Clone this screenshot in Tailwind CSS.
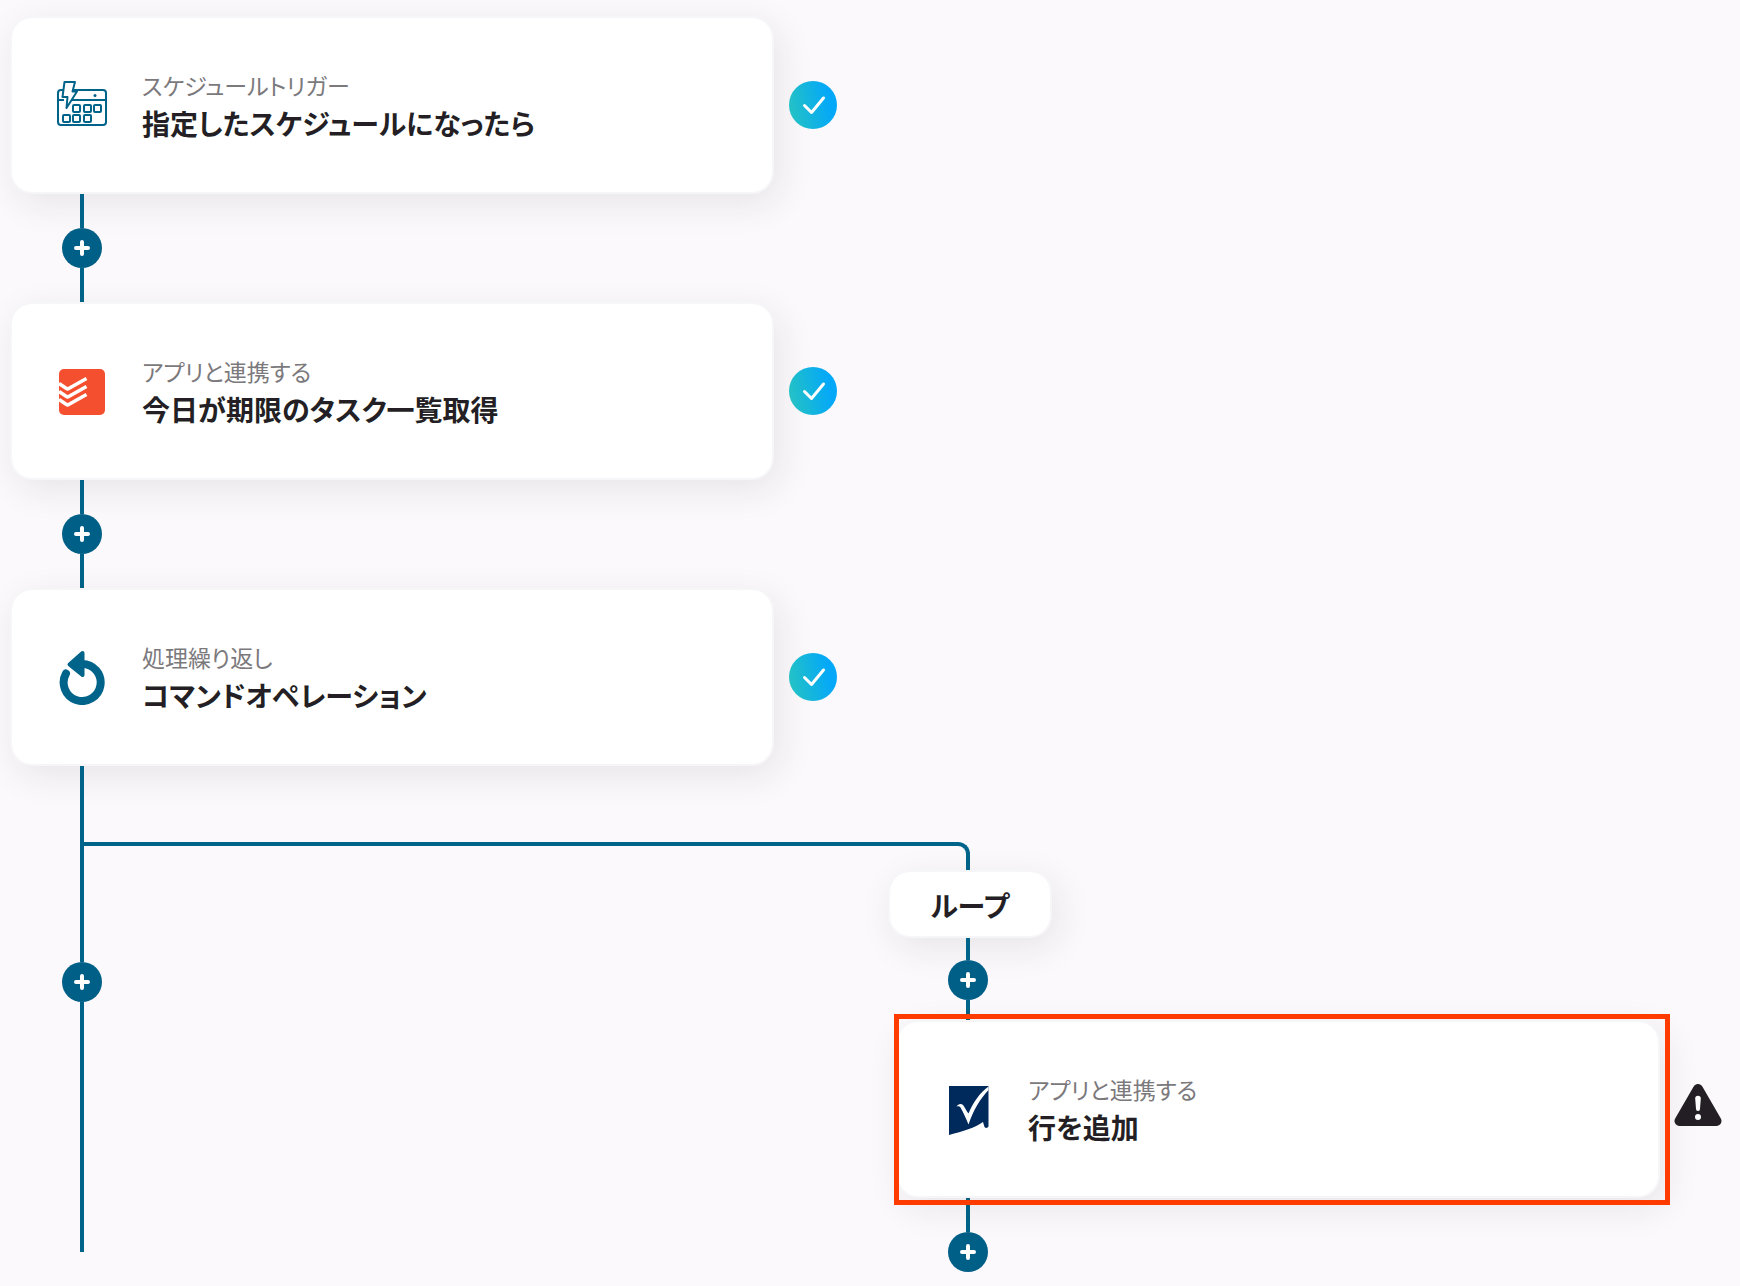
<!DOCTYPE html>
<html lang="ja">
<head>
  <meta charset="UTF-8" />
  <meta name="viewport" content="width=device-width, initial-scale=1.0"/>
  <title>フローボット</title>
  <script src="https://cdn.jsdelivr.net/npm/@tailwindcss/browser@4"></script>
</head>
<body class="bg-[#fbf9fc] min-h-screen text-[#231f24] font-['Noto_Sans_CJK_JP',sans-serif] [font-feature-settings:'palt']">

  <!-- Shared icons -->
  <svg class="absolute w-0 h-0" aria-hidden="true">
    <defs>
      <linearGradient id="done" x1="0" y1="0.6" x2="1" y2="0.4">
        <stop offset="0" stop-color="#24c2c4"/>
        <stop offset="0.85" stop-color="#04a8f8"/>
      </linearGradient>
    </defs>
    <symbol id="plus" viewBox="0 0 16 16">
      <path d="M8 2v12M2 8h12" fill="none" stroke="#fff" stroke-width="4" stroke-linecap="round"/>
    </symbol>
    <symbol id="check" viewBox="0 0 48 48">
      <circle cx="24" cy="24" r="24" fill="url(#done)"/>
      <path d="M15.500 24.500l7 7L34.500 17" fill="none" stroke="#fff" stroke-width="3" stroke-linecap="round" stroke-linejoin="round"/>
    </symbol>
  </svg>

  <main class="pt-4 pl-[10px]">

    <!-- Step 1: schedule trigger -->
    <div class="flex items-center gap-[15px]">
      <section class="w-[764px] h-[178px] flex items-center gap-[34px] pl-11 bg-white border-2 border-[#f6f5f7] bg-clip-padding rounded-[22px] shadow-[6px_10px_36px_rgba(35,31,36,0.09)]">
        <svg class="w-[52px] h-[52px] shrink-0" viewBox="0 1 52 52" fill="none" stroke="#00648a" stroke-width="2" stroke-linejoin="round">
          <path d="M16.500 12H47a3 3 0 0 1 3 3v29a3 3 0 0 1-3 3H5a3 3 0 0 1-3-3V15a3 3 0 0 1 3-3h2M2 22h6M15 22h35"/>
          <path d="M8.500 4H19l-2.500 9.500H21L10.500 30l1-11H6.500z"/>
          <rect x="17" y="27" width="7" height="7" rx="1"/>
          <rect x="28" y="27" width="7" height="7" rx="1"/>
          <rect x="38" y="27" width="7" height="7" rx="1"/>
          <rect x="7" y="37" width="7" height="7" rx="1"/>
          <rect x="17" y="37" width="7" height="7" rx="1"/>
          <rect x="28" y="37" width="7" height="7" rx="1"/>
          <circle cx="39" cy="17.500" r="1.500" fill="#00648a" stroke="none"/>
        </svg>
        <div class="pt-1">
          <p class="text-[23px] leading-8 text-[#7b797c]">スケジュールトリガー</p>
          <h2 class="text-[28px] leading-[44px] font-bold">指定したスケジュールになったら</h2>
        </div>
      </section>
      <svg class="w-12 h-12 shrink-0" role="img" aria-label="設定済み"><use href="#check"/></svg>
    </div>

    <!-- Connector -->
    <div class="ml-[52px] w-10 h-[108px] flex flex-col items-center">
      <span class="w-1 flex-1 bg-[#00648a]"></span>
      <button type="button" aria-label="追加" class="w-10 h-10 rounded-full bg-[#005f86] flex items-center justify-center hover:bg-[#004f70]"><svg class="w-4 h-4"><use href="#plus"/></svg></button>
      <span class="w-1 flex-1 bg-[#00648a]"></span>
    </div>

    <!-- Step 2: Todoist -->
    <div class="flex items-center gap-[15px]">
      <section class="w-[764px] h-[178px] flex items-center gap-[34px] pl-11 bg-white border-2 border-[#f6f5f7] bg-clip-padding rounded-[22px] shadow-[6px_10px_36px_rgba(35,31,36,0.09)]">
        <svg class="w-[52px] h-[52px] shrink-0" viewBox="0 0 52 52">
          <rect x="3" y="4" width="46" height="46" rx="5" fill="#f4502f"/>
          <path d="M3 18.500l7.500 5a2 2 0 0 0 2.200 0L30.500 13.500M3 26.500l7.500 5a2 2 0 0 0 2.200 0L30.500 21.500M3 34.500l7.500 5a2 2 0 0 0 2.200 0L30.500 29.500" fill="none" stroke="#fff" stroke-width="3.500" stroke-linejoin="round"/>
        </svg>
        <div class="pt-1">
          <p class="text-[23px] leading-8 text-[#7b797c]">アプリと連携する</p>
          <h2 class="text-[28px] leading-[44px] font-bold">今日が期限のタスク一覧取得</h2>
        </div>
      </section>
      <svg class="w-12 h-12 shrink-0" role="img" aria-label="設定済み"><use href="#check"/></svg>
    </div>

    <!-- Connector -->
    <div class="ml-[52px] w-10 h-[108px] flex flex-col items-center">
      <span class="w-1 flex-1 bg-[#00648a]"></span>
      <button type="button" aria-label="追加" class="w-10 h-10 rounded-full bg-[#005f86] flex items-center justify-center hover:bg-[#004f70]"><svg class="w-4 h-4"><use href="#plus"/></svg></button>
      <span class="w-1 flex-1 bg-[#00648a]"></span>
    </div>

    <!-- Step 3: loop -->
    <div class="flex items-center gap-[15px]">
      <section class="w-[764px] h-[178px] flex items-center gap-[34px] pl-11 bg-white border-2 border-[#f6f5f7] bg-clip-padding rounded-[22px] shadow-[6px_10px_36px_rgba(35,31,36,0.09)]">
        <svg class="w-[52px] h-[56px] shrink-0" viewBox="0 0 52 56" fill="none">
          <path d="M10 24.500A18.500 18.500 0 1 0 26 15" stroke="#00648a" stroke-width="8" stroke-linecap="round"/>
          <path d="M26.500 4L13.500 15.500L26.500 26z" fill="#00648a" stroke="#00648a" stroke-width="4" stroke-linejoin="round"/>
        </svg>
        <div class="pt-1">
          <p class="text-[23px] leading-8 text-[#7b797c]">処理繰り返し</p>
          <h2 class="text-[28px] leading-[44px] font-bold">コマンドオペレーション</h2>
        </div>
      </section>
      <svg class="w-12 h-12 shrink-0" role="img" aria-label="設定済み"><use href="#check"/></svg>
    </div>

    <!-- Fork -->
    <div class="flex items-start">

      <!-- Trunk -->
      <div class="ml-[52px] w-10 shrink-0 flex flex-col items-center">
        <span class="w-1 h-[196px] bg-[#00648a]"></span>
        <button type="button" aria-label="追加" class="w-10 h-10 rounded-full bg-[#005f86] flex items-center justify-center hover:bg-[#004f70]"><svg class="w-4 h-4"><use href="#plus"/></svg></button>
        <span class="w-1 h-[250px] bg-[#00648a]"></span>
      </div>

      <!-- Loop branch -->
      <div class="-ml-[18px] mt-[76px]">
        <div class="w-[886px] h-7 border-t-4 border-r-4 border-[#00648a] rounded-tr-[12px]"></div>

        <div class="ml-[812px]">
          <div class="-ml-2 w-[164px] h-[68px] flex items-center justify-center pt-0.5 bg-white border-2 border-[#f6f5f7] bg-clip-padding rounded-[22px] shadow-[6px_10px_36px_rgba(35,31,36,0.09)] text-[28px] font-bold">ループ</div>

          <div class="ml-[52px] w-10 h-[82px] flex flex-col items-center">
            <span class="w-1 h-[22px] bg-[#00648a]"></span>
            <button type="button" aria-label="追加" class="w-10 h-10 rounded-full bg-[#005f86] flex items-center justify-center hover:bg-[#004f70]"><svg class="w-4 h-4"><use href="#plus"/></svg></button>
            <span class="w-1 flex-1 bg-[#00648a]"></span>
          </div>

          <!-- Smartsheet step, needs attention -->
          <div class="flex items-center gap-[14px]">
            <div class="relative">
              <section class="w-[764px] h-[178px] flex items-center gap-[34px] pl-11 bg-white border-2 border-[#f6f5f7] bg-clip-padding rounded-[22px] shadow-[6px_10px_36px_rgba(35,31,36,0.09)]">
                <svg class="w-[52px] h-[52px] shrink-0" viewBox="-1 -1 52 52">
                  <path d="M6 2h39.500v40.500c-1 1.500-2.500 2-4 .5L40 38c-8 6-20 9-34 13z" fill="#002a5c"/>
                  <path d="M13.500 22.500c1.500-2.500 4.500-3.500 6.500-1.500 1.500 2 3.500 6 5.500 8.500C30 18.500 37 8.500 45.500 2.500V6C37 15 30.500 26 25.500 40.500c-2.500-6-5-12-8-17-1-1.500-2.500-1.500-4-1z" fill="#fff"/>
                </svg>
                <div class="pt-1">
                  <p class="text-[23px] leading-8 text-[#7b797c]">アプリと連携する</p>
                  <h2 class="text-[28px] leading-[44px] font-bold">行を追加</h2>
                </div>
              </section>
              <div class="absolute -top-[6px] -bottom-[7px] -left-[2px] -right-[10px] border-[5px] border-[#ff3b00] pointer-events-none"></div>
            </div>
            <svg class="w-12 h-[50px] shrink-0" viewBox="0 0 48 50" role="img" aria-label="要確認">
              <path d="M24 5L5.500 37H42.500z" fill="#231f24" stroke="#231f24" stroke-width="10" stroke-linejoin="round"/>
              <path d="M21.200 14.500a2.800 2.800 0 0 1 5.600 0L26 25a2 2 0 0 1-4 0z" fill="#fff"/>
              <circle cx="24" cy="33" r="3" fill="#fff"/>
            </svg>
          </div>

          <div class="ml-[52px] w-10 flex flex-col items-center">
            <span class="w-1 h-[34px] bg-[#00648a]"></span>
            <button type="button" aria-label="追加" class="w-10 h-10 rounded-full bg-[#005f86] flex items-center justify-center hover:bg-[#004f70]"><svg class="w-4 h-4"><use href="#plus"/></svg></button>
          </div>
        </div>
      </div>
    </div>
  </main>

</body>
</html>
